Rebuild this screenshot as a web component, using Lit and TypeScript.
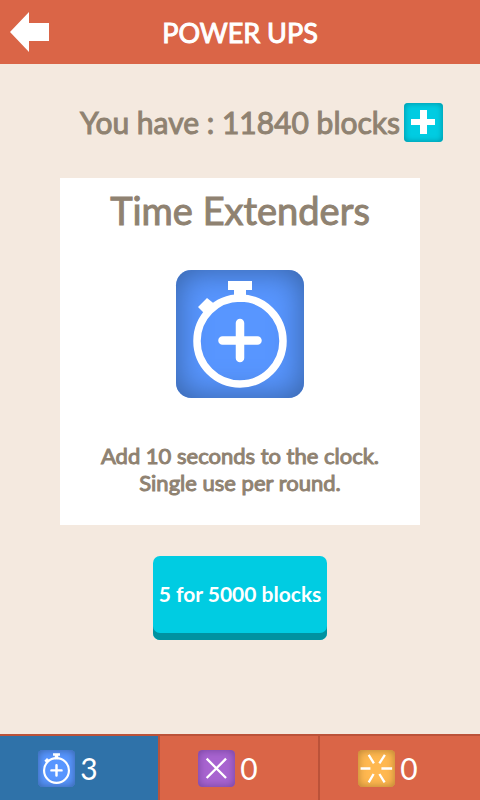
import { LitElement, html, css, svg, TemplateResult } from "lit";
import { customElement, property, state } from "lit/decorators.js";
import { classMap } from "lit/directives/class-map.js";

type PowerUp = "time" | "cross" | "burst";

const glyphs: Record<PowerUp, TemplateResult> = {
  time: svg`
    <circle cx="64" cy="71" r="43" fill="none" stroke="#fff" stroke-width="7.5"/>
    <path d="M52 11H76V20H70V32H58V20H52Z M31 28L41 36L31 46L22 37Z" fill="#fff"/>
    <path d="M64 53V88M46.500 70.500H81.500" stroke="#fff" stroke-width="8.500" stroke-linecap="round"/>`,
  cross: svg`
    <path d="M30 30L97 97M97 30L30 97" stroke="#fff" stroke-width="8"/>`,
  burst: svg`
    <path d="M9 64H43M81 64H118M37 17L55 46M93 17L74 46M54 83L37 112M74 83L92 112"
      stroke="#fff" stroke-width="8"/>`,
};

@customElement("power-icon")
export class PowerIcon extends LitElement {
  @property() kind: PowerUp = "time";

  static styles = css`
    :host { display: block; aspect-ratio: 1; }
    .tile { height: 100%; border-radius: 12%; box-sizing: border-box; }
    .time { background: #5896ff; box-shadow: inset 0 0 var(--shade, 8px) #355f9f; }
    .cross { background: #a864d0; box-shadow: inset 0 0 var(--shade, 8px) #71419a; }
    .burst { background: #ffb850; box-shadow: inset 0 0 var(--shade, 8px) #b07c30; }
    .glyph { display: block; width: 100%; height: 100%; }
  `;

  render() {
    return html`<div class="tile ${this.kind}">
      <svg class="glyph" viewBox="0 0 128 128" aria-hidden="true">${glyphs[this.kind]}</svg>
    </div>`;
  }
}

@customElement("app-root")
export class AppRoot extends LitElement {
  @state() private selected: PowerUp = "time";

  private stock: { kind: PowerUp; label: string; count: number }[] = [
    { kind: "time", label: "Time Extenders", count: 3 },
    { kind: "cross", label: "Cross", count: 0 },
    { kind: "burst", label: "Burst", count: 0 },
  ];

  static styles = css`
    :host {
      display: flex;
      flex-direction: column;
      min-height: 100vh;
      background: #f4e9df;
      color: #8f8271;
      font-family: Lato, "Liberation Sans", sans-serif;
    }
    button {
      font: inherit;
      color: #fff;
      border: 0;
      padding: 0;
      cursor: pointer;
    }
    h1, h2, p { margin: 0; font-weight: 400; }
    .bar {
      display: grid;
      grid-template-columns: 1fr auto 1fr;
      align-items: center;
      height: 64px;
      padding: 0 10px;
      box-sizing: border-box;
      background: #da6547;
      color: #fff;
    }
    .back { width: 40px; height: 40px; background: none; }
    .back svg, .plus svg { display: block; width: 100%; height: 100%; }
    .heading { padding-top: 2px; font-size: 27px; line-height: 36px; -webkit-text-stroke: 1px; }
    .balance {
      display: grid;
      grid-template-columns: 1fr auto 1fr;
      align-items: start;
      gap: 4px;
      margin-top: 39px;
    }
    .amount { grid-column: 2; font-size: 30px; line-height: 38px; -webkit-text-stroke: 1px; }
    .plus {
      width: 39px;
      height: 39px;
      border-radius: 4px;
      background: #00cce2;
      box-shadow: inset 0 0 6px #008c9c;
    }
    .card {
      display: flex;
      flex-direction: column;
      align-items: center;
      margin: 36px 60px 0;
      padding: 10px 16px 29px;
      background: #fff;
      text-align: center;
    }
    .title { font-size: 38px; line-height: 44px; -webkit-text-stroke: 1px; }
    .art { width: 128px; margin: 38px 0 44px; --shade: 32px; }
    .text { font-size: 22px; line-height: 27px; -webkit-text-stroke: 1px; }
    .buy {
      align-self: center;
      min-width: 174px;
      height: 84px;
      margin: 31px 0;
      padding: 0 4px 9px;
      border-radius: 7px;
      background: #00cce2;
      box-shadow: inset 0 -7px #0092a0;
      font-size: 21px;
      font-weight: 700;
    }
    .tabs {
      display: grid;
      grid-template-columns: repeat(3, 1fr);
      height: 66px;
      margin-top: auto;
      box-sizing: border-box;
      border-top: 2px solid #bb5239;
      background: #da6547;
    }
    .tab {
      display: flex;
      align-items: center;
      justify-content: center;
      gap: 5px;
      padding-right: 22px;
      background: none;
      border-right: 2px solid #bb5239;
      font-size: 30px;
    }
    .tab:last-child { border-right-color: transparent; }
    .tab.on { background: #2f72a9; }
    .mini { width: 37px; --shade: 8px; }
  `;

  render() {
    return html`
      <header class="bar">
        <button class="back" aria-label="Back">
          <svg viewBox="0 0 40 40"><path d="M0 20L19 0V11H39V29H19V40Z" fill="#fff"/></svg>
        </button>
        <h1 class="heading">POWER UPS</h1>
      </header>
      <section class="balance">
        <p class="amount">You have : 11840 blocks</p>
        <button class="plus" aria-label="Get more blocks">
          <svg viewBox="0 0 39 39"><path d="M16 7H23V16H31V22H23V31H16V22H7V16H16Z" fill="#fff"/></svg>
        </button>
      </section>
      <section class="card">
        <h2 class="title">Time Extenders</h2>
        <power-icon class="art" kind="time"></power-icon>
        <p class="text">Add 10 seconds to the clock.<br />Single use per round.</p>
      </section>
      <button class="buy">5 for 5000 blocks</button>
      <nav class="tabs">
        ${this.stock.map(
          (s) => html`<button
            class=${classMap({ tab: true, on: s.kind === this.selected })}
            aria-label="${s.label}: ${s.count}"
            @click=${() => (this.selected = s.kind)}
          >
            <power-icon class="mini" kind=${s.kind}></power-icon>
            <span>${s.count}</span>
          </button>`
        )}
      </nav>
    `;
  }
}
